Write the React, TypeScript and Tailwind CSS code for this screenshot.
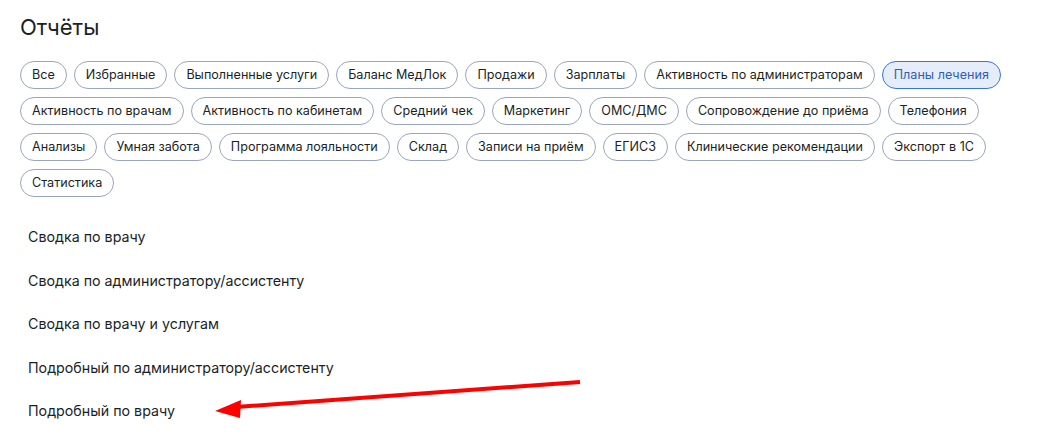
import React from "react";

const filters = [
  "Все",
  "Избранные",
  "Выполненные услуги",
  "Баланс МедЛок",
  "Продажи",
  "Зарплаты",
  "Активность по администраторам",
  "Планы лечения",
  "Активность по врачам",
  "Активность по кабинетам",
  "Средний чек",
  "Маркетинг",
  "ОМС/ДМС",
  "Сопровождение до приёма",
  "Телефония",
  "Анализы",
  "Умная забота",
  "Программа лояльности",
  "Склад",
  "Записи на приём",
  "ЕГИСЗ",
  "Клинические рекомендации",
  "Экспорт в 1С",
  "Статистика",
];

const reports = [
  "Сводка по врачу",
  "Сводка по администратору/ассистенту",
  "Сводка по врачу и услугам",
  "Подробный по администратору/ассистенту",
  "Подробный по врачу",
];

export default function App() {
  const active = "Планы лечения";

  return (
    <div className="relative min-h-screen bg-white text-[#1b1f26] font-['Inter','Noto_Sans',sans-serif]">
      <div className="px-5 pt-[13px]">
        <h1 className="text-[22px] leading-7 font-normal">Отчёты</h1>

        {/* filter chips */}
        <div className="mt-[20px] flex flex-wrap gap-x-[7px] gap-y-[8px]">
          {filters.map((f) => {
            const isActive = f === active;
            return (
              <button
                key={f}
                className={`h-[28px] px-[11px] rounded-full border text-[12.6px] leading-none whitespace-nowrap ${
                  isActive
                    ? "border-[#3a73dc] bg-[#e5edfb] text-[#2d5fb9]"
                    : "border-[#9aa6bd] bg-white text-[#1b1f26]"
                }`}
              >
                {f}
              </button>
            );
          })}
        </div>

        {/* reports list */}
        <ul className="mt-[18px]">
          {reports.map((r) => (
            <li key={r} className="h-[43.5px] flex items-center pl-2 text-[14.25px]">
              {r}
            </li>
          ))}
        </ul>
      </div>

      {/* annotation arrow */}
      <svg
        className="absolute left-0 top-0 pointer-events-none"
        width="1043"
        height="441"
        viewBox="0 0 1043 441"
      >
        <line x1="580" y1="382" x2="236" y2="407" stroke="#ff0000" strokeWidth="4" />
        <polygon points="215,411 241,400 240,418" fill="#ff0000" />
      </svg>
    </div>
  );
}
